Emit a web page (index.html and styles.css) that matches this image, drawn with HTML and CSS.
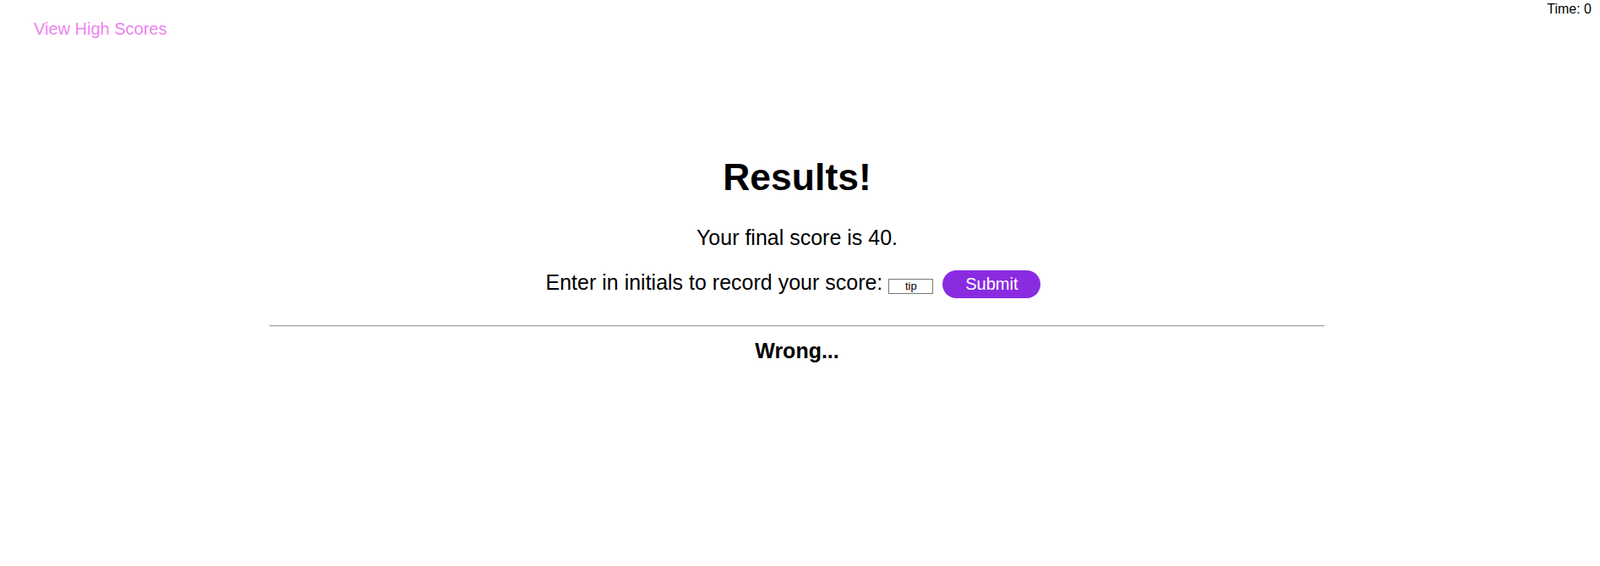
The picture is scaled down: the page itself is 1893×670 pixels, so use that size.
FILE: index.html
```html
<!DOCTYPE html>
<html lang="en">
<head>
<meta charset="utf-8">
<title>Code Quiz</title>
<link rel="stylesheet" href="styles.css">
</head>
<body>
<header class="topbar">
  <a class="scores-link" href="#">View High Scores</a>
  <div class="timer">Time: 0</div>
</header>
<main class="quiz">
  <h1 class="title">Results!</h1>
  <p class="final">Your final score is 40.</p>
  <p class="entry">Enter in initials to record your score: <input class="initials" type="text" value="tip"> <button class="submit" type="button">Submit</button></p>
  <hr class="divider">
  <div class="feedback">Wrong...</div>
</main>
</body>
</html>
```
FILE: styles.css
```css
html, body {
  margin: 0;
  padding: 0;
  background: #ffffff;
}

body {
  font-family: "Liberation Sans", Arial, sans-serif;
  color: #000000;
}

.topbar {
  display: flex;
  justify-content: space-between;
  align-items: flex-start;
}

.scores-link {
  margin: 23px 0 0 40px;
  font-size: 20px;
  line-height: 23px;
  color: #ee82ee;
  text-decoration: none;
}

.timer {
  margin: 2px 10px 0 0;
  font-size: 16px;
  line-height: 18px;
}

.quiz {
  width: 1248px;
  margin: 0 0 0 319px;
  text-align: center;
}

.title {
  margin: 138px 0 0;
  font-size: 44.5px;
  line-height: 51px;
  font-weight: bold;
}

.final {
  margin: 32px 0 0;
  font-size: 25px;
  line-height: 28px;
}

.entry {
  margin: 25px 0 0;
  font-size: 25px;
  line-height: 28px;
}

.initials {
  box-sizing: border-box;
  width: 53px;
  height: 18px;
  padding: 0 2px;
  margin: 0;
  border: 1px solid #767676;
  font-family: "Liberation Sans", Arial, sans-serif;
  font-size: 13px;
  text-align: center;
  vertical-align: baseline;
}

.submit {
  margin: 0 9px 0 4px;
  padding: 5px 27px;
  border: none;
  border-radius: 17px;
  background: #8a2be2;
  color: #ffffff;
  font-family: "Liberation Sans", Arial, sans-serif;
  font-size: 20px;
  line-height: 23px;
  vertical-align: baseline;
  cursor: pointer;
}

.divider {
  margin: 32px 0 0;
  height: 0;
  border: none;
  border-top: 1px solid #9a9a9a;
  border-bottom: 1px solid #eeeeee;
}

.feedback {
  margin: 14px 0 0;
  font-size: 25px;
  line-height: 28px;
  font-weight: bold;
}
```
